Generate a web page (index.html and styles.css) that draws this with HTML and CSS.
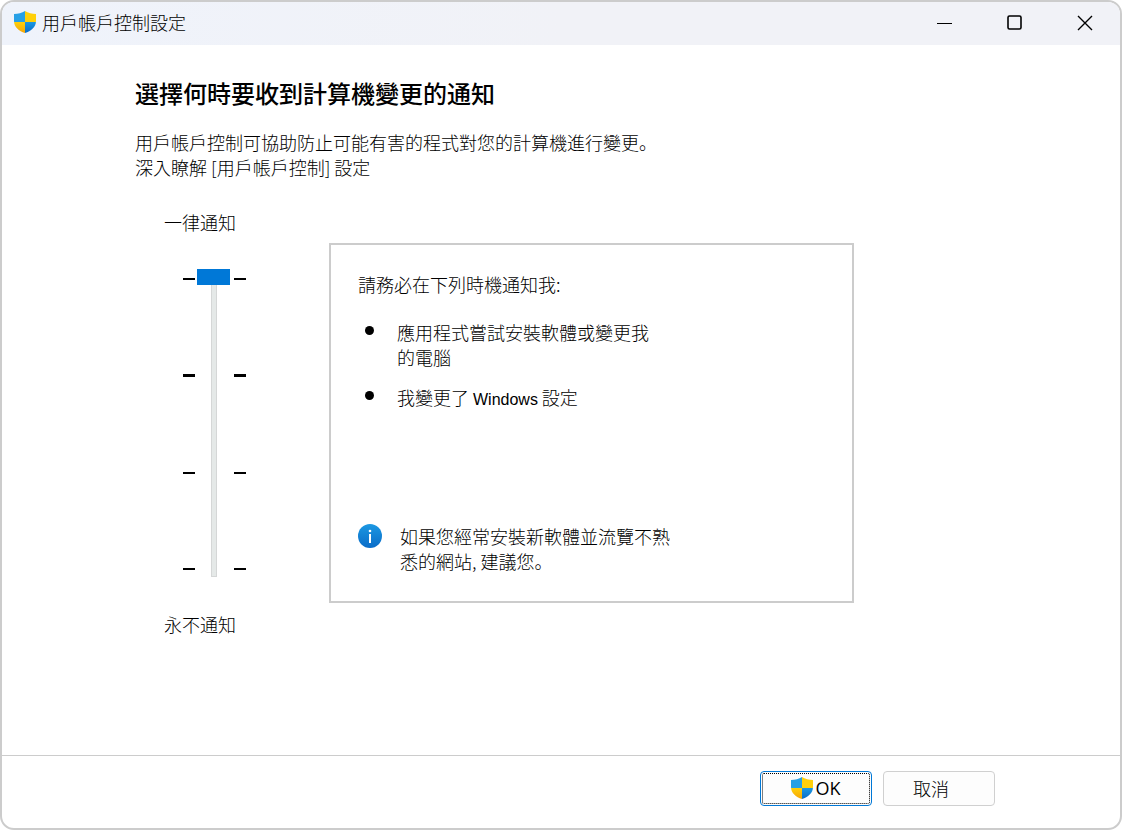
FILE: index.html
```html
<!DOCTYPE html>
<html lang="zh-Hant">
<head>
  <meta charset="UTF-8">
  <meta name="viewport" content="width=device-width, initial-scale=1.0">
  <title>用戶帳戶控制設定</title>
  <link rel="stylesheet" href="styles.css">
</head>
<body>
  <!-- Shared shield icon -->
  <svg class="defs" width="0" height="0" aria-hidden="true">
    <defs>
      <linearGradient id="blue" x1="0" y1="0" x2="0" y2="1">
        <stop offset="0" stop-color="#1c98e2"/>
        <stop offset="1" stop-color="#0a6cc8"/>
      </linearGradient>
      <linearGradient id="yellow" x1="0" y1="0" x2="0" y2="1">
        <stop offset="0" stop-color="#ffd00a"/>
        <stop offset="1" stop-color="#f5a608"/>
      </linearGradient>
      <clipPath id="shieldShape">
        <path d="M11 0C8 2 4 3 0 3V10C0 16 5 20 11 22C17 20 22 16 22 10V3C18 3 14 2 11 0Z"/>
      </clipPath>
      <symbol id="shield" viewBox="0 0 22 22">
        <g clip-path="url(#shieldShape)">
          <rect width="11" height="11" fill="#27a0e6"/>
          <rect x="11" width="11" height="11" fill="#ffd00a"/>
          <rect y="11" width="11" height="11" fill="url(#yellow)"/>
          <rect x="11" y="11" width="11" height="11" fill="url(#blue)"/>
        </g>
      </symbol>
    </defs>
  </svg>

  <div class="window">
    <header class="titlebar">
      <svg class="shield"><use href="#shield"/></svg>
      <span class="caption">用戶帳戶控制設定</span>
      <div class="controls">
        <button aria-label="最小化"><svg width="16" height="16"><path d="M0 8.5H15"/></svg></button>
        <button aria-label="最大化"><svg width="16" height="16"><rect x="1" y="1" width="13" height="13" rx="1.5" stroke-width="1.6"/></svg></button>
        <button aria-label="關閉"><svg width="16" height="16"><path d="M1 1L15 15M15 1L1 15" stroke-width="1.4"/></svg></button>
      </div>
    </header>

    <main>
      <h1>選擇何時要收到計算機變更的通知</h1>
      <p class="intro">用戶帳戶控制可協助防止可能有害的程式對您的計算機進行變更。<br><a href="#">深入瞭解 [用戶帳戶控制] 設定</a></p>

      <div class="settings">
        <div class="level">
          <label for="level">一律通知</label>
          <div class="slider">
            <div class="ticks"><i></i><i></i><i></i><i></i></div>
            <input type="range" id="level" min="0" max="3" value="3">
            <div class="ticks"><i></i><i></i><i></i><i></i></div>
          </div>
          <span>永不通知</span>
        </div>

        <section class="panel">
          <p>請務必在下列時機通知我:</p>
          <ul>
            <li>應用程式嘗試安裝軟體或變更我<br>的電腦</li>
            <li>我變更了 <span class="latin">Windows</span> 設定</li>
          </ul>
          <div class="info">
            <svg width="24" height="24">
              <circle cx="12" cy="12" r="12" fill="url(#blue)"/>
              <circle cx="12" cy="7" r="1.3" fill="#fff"/>
              <rect x="11" y="10" width="2" height="9" fill="#fff"/>
            </svg>
            <p>如果您經常安裝新軟體並流覽不熟<br>悉的網站, 建議您。</p>
          </div>
        </section>
      </div>
    </main>

    <footer>
      <button class="btn primary"><svg class="shield"><use href="#shield"/></svg>OK</button>
      <button class="btn cancel">取消</button>
    </footer>
  </div>
</body>
</html>
```
FILE: styles.css
```css
:root {
  --line: #ccc;
  --accent: #0078d7;
  --cjk: "Noto Sans CJK JP", "Noto Sans CJK TC", sans-serif;
}
* {
  box-sizing: border-box;
}
body {
  margin: 0;
  background: #fff;
  color: #000;
  font: 300 18px/25px var(--cjk);
  -webkit-locale: "ja"; /* keeps the full stop at the lower left */
}
h1, p, ul {
  margin: 0;
}
button {
  font: inherit;
  color: inherit;
}
.defs {
  position: absolute;
}
.window {
  display: flex;
  flex-direction: column;
  min-height: 100vh;
  border: 2px solid var(--line);
  border-radius: 14px;
  overflow: hidden;
}

/* Title bar */
.titlebar {
  display: flex;
  height: 43px;
  padding-left: 12px;
  background: linear-gradient(90deg, #eff3fb, #f1f2f7 50%);
}
.shield {
  width: 22px;
  height: 22px;
}
.titlebar .shield {
  margin-top: 9px;
}
.caption {
  margin: 8px 0 0 6px;
}
.controls {
  display: flex;
  margin-left: auto;
}
.controls button {
  display: flex;
  align-items: center;
  justify-content: center;
  width: 70px;
  height: 41px;
  padding: 0;
  border: none;
  background: none;
}
.controls svg {
  fill: none;
  stroke: #000;
}

/* Content */
main {
  flex: 1;
  padding: 34px 133px 0;
}
h1 {
  font-size: 24px;
  line-height: 28px;
  font-weight: 500;
}
.intro {
  margin-top: 23px;
}
.intro a {
  color: inherit;
  text-decoration: none;
}
.settings {
  display: flex;
  align-items: flex-start;
  margin-top: 30px;
}
.level {
  display: flex;
  flex-direction: column;
  width: 194px;
  padding-left: 29px;
}
.slider {
  display: flex;
  gap: 2px;
  width: 64px;
  height: 308px;
  margin: 34px 0 35px 19px;
}
.slider input {
  appearance: none;
  writing-mode: vertical-lr;
  direction: rtl;
  width: 33px;
  height: 308px;
  margin: 0;
  background: none;
}
.slider input::-webkit-slider-runnable-track {
  width: 6px;
  border: 1px solid #d5d7d7;
  border-top: none;
  background: #e5e9e8;
}
.slider input::-webkit-slider-thumb {
  appearance: none;
  width: 33px;
  height: 16px;
  margin-left: -15px;
  background: var(--accent);
}
.ticks {
  display: flex;
  flex-direction: column;
  justify-content: space-between;
  padding: 9px 0 7px;
}
.ticks:last-child {
  margin-left: 2px;
}
.ticks i {
  width: 12px;
  height: 2px;
  background: #000;
}
.ticks i:nth-child(2) {
  height: 3px;
}
.panel {
  display: flex;
  flex-direction: column;
  flex: 1;
  max-width: 525px;
  min-height: 360px;
  margin-top: 33px;
  padding: 27px 26px 27px 27px;
  border: 2px solid var(--line);
}
.panel ul {
  margin-top: 23px;
  padding: 0;
  list-style: none;
}
.panel li {
  position: relative;
  margin-bottom: 15px;
  padding-left: 39px;
}
.panel li::before {
  content: "";
  position: absolute;
  left: 7px;
  top: 6px;
  width: 9px;
  height: 9px;
  border-radius: 50%;
  background: #000;
}
.latin {
  font-family: "Liberation Sans", sans-serif;
  font-size: 16px;
}
.info {
  display: flex;
  gap: 18px;
  margin-top: auto;
}

/* Bottom buttons */
footer {
  display: flex;
  justify-content: flex-end;
  gap: 11px;
  padding: 15px 125px 22px 16px;
  border-top: 1px solid var(--line);
}
.btn {
  display: flex;
  align-items: center;
  justify-content: center;
  width: 112px;
  height: 35px;
  padding: 0;
  border: 1px solid #d0d0d0;
  border-radius: 4px;
  background: #fdfdfd;
}
.primary {
  gap: 2px;
  border-color: var(--accent);
  outline: 1px dotted #000;
  outline-offset: -3px;
  font-family: "Open Sans", sans-serif;
  font-weight: 400;
}
.primary .shield {
  margin-bottom: 2px;
}
.cancel {
  padding-right: 16px;
}
```
